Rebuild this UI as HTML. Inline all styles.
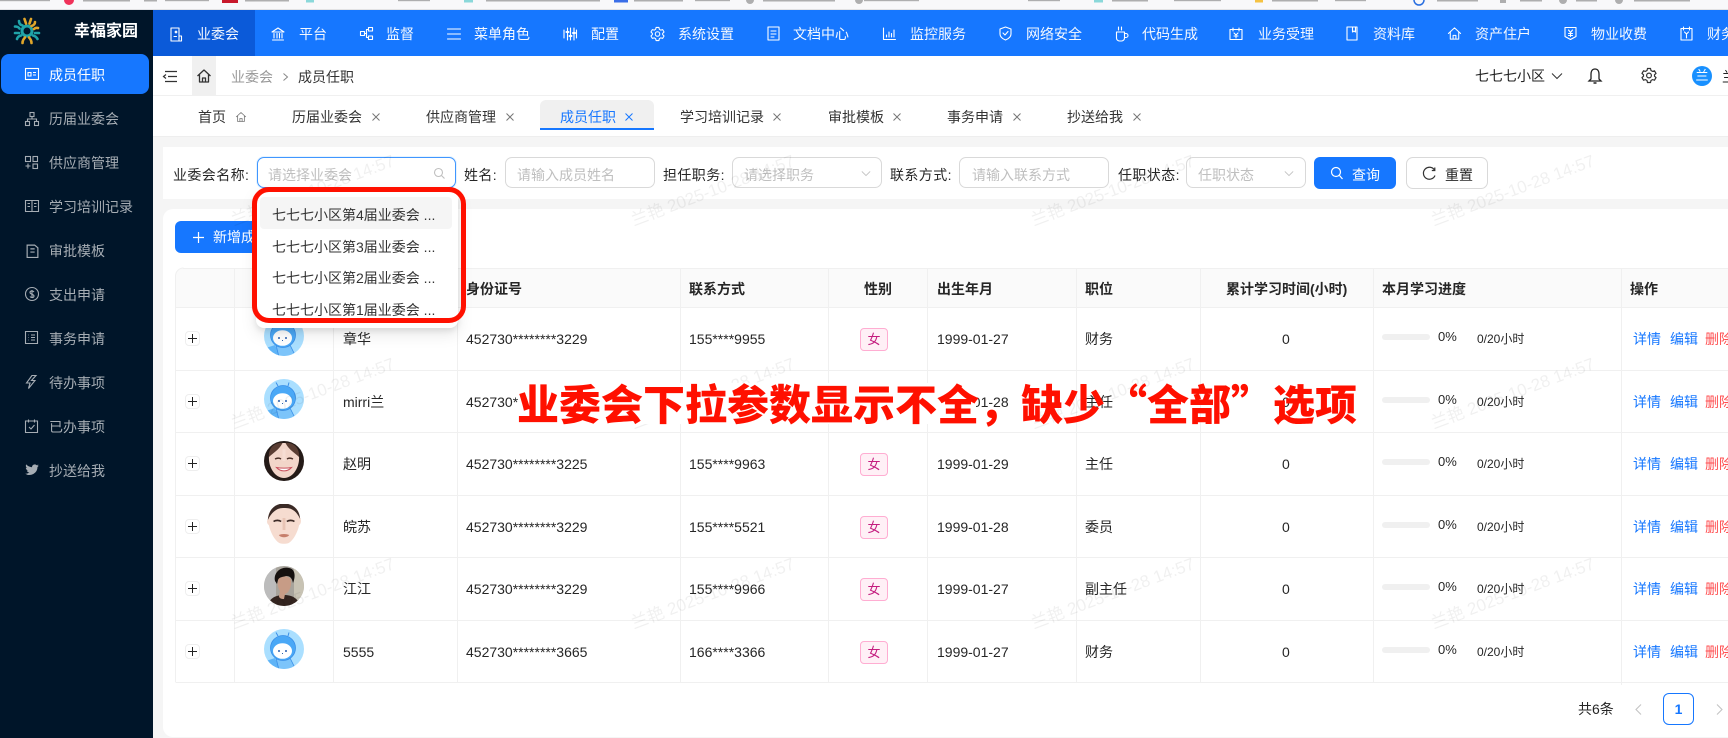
<!DOCTYPE html>
<html lang="zh-CN"><head><meta charset="utf-8"><title>成员任职</title>
<style>
*{box-sizing:border-box}
html,body{margin:0;padding:0;width:1728px;height:738px;overflow:hidden;background:#f5f5f5;font-family:"Liberation Sans","Noto Sans CJK SC",sans-serif;font-size:14px;color:#262626}
div,span,svg{position:absolute}
.t{white-space:nowrap;line-height:20px}
svg{overflow:visible;fill:none}
svg.i{stroke:#fff;stroke-width:1.1;stroke-linecap:round;stroke-linejoin:round}
.n{color:#f4f8ff;top:24px}
.m{color:#a6adb4;left:49px}
svg.s{stroke:#a6adb4;left:25px;stroke-width:1.1}
.tb{top:107px;color:#333}
.x{top:112px;width:10px;height:10px;stroke:#777;stroke-width:1}
.l{top:165px;letter-spacing:.4px}
.b{top:157px;height:31px;background:#fff;border:1px solid #d9d9d9;border-radius:7px}
.p{top:165px;color:#bfbfbf}
.th{top:279px;font-weight:700;color:#262626}
.r{left:0;width:1728px;height:20px}
.pl{left:185px;top:2px;width:15px;height:15px;border:1px solid #eee;border-radius:4px;background:#fff}
.pl:before{content:"";position:absolute;left:2px;top:6px;width:9px;height:1px;background:#222}
.pl:after{content:"";position:absolute;left:6px;top:2px;width:1px;height:9px;background:#222}
.tag{left:860px;top:-1px;width:28px;height:23px;background:#fff0f6;border:1px solid #ffadd2;border-radius:4px;color:#c41d7f;text-align:center;line-height:21px;font-size:13px}
.bar{left:1382px;top:5px;width:48px;height:6px;border-radius:3px;background:#f0f0f0}
.wm{white-space:nowrap;font-size:17px;line-height:20px;color:rgba(0,0,0,.06);width:200px;text-align:center;transform:rotate(-20.5deg)}
.o{left:16px;color:#333;white-space:nowrap;line-height:20px}
</style></head><body>

<svg width="0" height="0" style="left:0;top:0">
<defs>
<symbol id="gear" viewBox="0 0 16 17"><path d="M6.5 1.5h3l.5 2 1.5.9 2-.6 1.5 2.6-1.5 1.4v1.4l1.5 1.4-1.5 2.6-2-.6-1.5.9-.5 2h-3l-.5-2-1.5-.9-2 .6-1.5-2.6 1.5-1.4V7.8L1 6.4l1.5-2.6 2 .6 1.5-.9z"/><circle cx="8" cy="8.5" r="2.4"/></symbol>
<symbol id="home" viewBox="0 0 16 16"><path d="M1.5 8 8 2l6.500 6M3.500 6.500V14h9V6.500M6.500 14v-4h3v4"/></symbol>
<symbol id="x" viewBox="0 0 10 10"><path d="M1.500 1.500l7 7M8.500 1.500l-7 7"/></symbol>
<symbol id="cv" viewBox="0 0 12 8"><path d="M1 1.500 6 6.500 11 1.500"/></symbol>
<symbol id="cart" viewBox="0 0 40 40">
<clipPath id="c1"><ellipse cx="20" cy="20" rx="20" ry="20"/></clipPath>
<g clip-path="url(#c1)"><rect width="40" height="40" fill="#aadfff"/>
<path d="M-1 33l12-4 6 13H-1z" fill="#5fb4f7"/>
<path d="M12 29l13-2 7 14H15z" fill="#7cc4fa" stroke="#3a8fe8" stroke-width=".8"/>
<path d="M14 7l-2-3.500M24 7l1-3.500" stroke="#3a8fe8" stroke-width="1"/>
<circle cx="19" cy="19" r="12.500" fill="#4aa8f6" stroke="#3a8fe8" stroke-width=".8"/>
<ellipse cx="18.500" cy="22" rx="9.500" ry="7.800" fill="#fff"/>
<circle cx="15" cy="22" r="1" fill="#2a5fb0"/><circle cx="22" cy="22" r="1" fill="#2a5fb0"/><path d="M18 24.500h1" stroke="#2a5fb0" stroke-width="1"/>
</g></symbol>
<symbol id="girl" viewBox="0 0 40 40">
<clipPath id="c2"><circle cx="20" cy="20" r="20"/></clipPath>
<g clip-path="url(#c2)"><rect width="40" height="40" fill="#241a17"/>
<path d="M5 15C6 6 13 2 20 2s14 4 15 13c1 11-6 22-15 22S4 26 5 15z" fill="#f2d5c9"/>
<path d="M5 16C9 12 15 9 18.500 2 11 1 4 7 5 16zM35 16C31 12 25 9 21.500 2 29 1 36 7 35 16z" fill="#5a3d33"/>
<path d="M11 18c2-1 4.500-1 6 0M23 18c1.500-1 4-1 6 0" stroke="#4a3028" stroke-width="1.400"/>
<path d="M12.500 26.500c4 4.500 11 4.500 15 0-4 .8-11 .8-15 0z" fill="#fff" stroke="#c9505c" stroke-width="1"/>
<path d="M20 8v12" stroke="#f8e3da" stroke-width="3" opacity=".6"/></g></symbol>
<symbol id="face" viewBox="0 0 40 40">
<path d="M3 15C4 5 11 0 20 0s16 4 17 14c1.500 2 1 6-1 7-2 8-6 15-11 18-3 1-7 1-10 0C10 36 6 29 4 21c-2-1-2.500-4-1-6z" fill="#f6dcd0"/>
<path d="M3 16C4 4 12-.5 20-.5S36 4 37 15C33 7 28 3.500 20 4 13 3.500 7 8 3 16z" fill="#3a2a26"/>
<path d="M9 17.500c2-1.500 6-1.500 8 0M23 17.500c2-1.500 6-1.500 8 0" stroke="#3c2a26" stroke-width="1.700"/>
<path d="M14.500 31c3-1.400 8-1.400 11 0-2 3-9 3-11 0z" fill="#c67f6c"/>
<path d="M20 14v12" stroke="#e8c4b5" stroke-width="3"/></symbol>
<symbol id="man" viewBox="0 0 40 40">
<clipPath id="c3"><circle cx="20" cy="20" r="20"/></clipPath>
<g clip-path="url(#c3)"><rect width="40" height="40" fill="#a8a49c"/><rect x="0" width="12" height="40" fill="#bcbcbc"/><rect x="30" width="10" height="40" fill="#c8c3b4"/>
<path d="M4 40c1-8 8-11 16-11s14 3 16 11z" fill="#33241f"/>
<path d="M14 14c0-5 12-5 13 0 1 6-2 13-6 14l-1 5c-3 0-5-1-5-3l1-5c-2-3-3-7-2-11z" fill="#c79c86"/>
<path d="M11 15C9 6 18 0 25 2c6 1 7 8 4 15-1-5-3-7-7-7-3 1-7 1-8 4l-1 4z" fill="#16110f"/></g></symbol>
<symbol id="cs" viewBox="0 0 14 14"><path d="M2 1.500h7l3 2.500v9H2zM5 5h4M5 8h4"/></symbol>
</defs></svg>

<!-- browser strip -->
<div style="left:0;top:0;width:1728px;height:10px;background:#f8f8fa;border-bottom:1px solid #e2e2e4"></div>
<svg style="left:0;top:0" width="1728" height="4">
<g fill="#666" opacity=".5">
<rect x="0" y="0" width="50" height="1.200"/><rect x="83" y="0" width="47" height="1.500"/><rect x="165" y="0" width="44" height="1.200"/><rect x="245" y="0" width="44" height="1.500"/><rect x="398" y="0" width="32" height="1.200"/><rect x="486" y="0" width="114" height="1.500"/><rect x="634" y="0" width="49" height="1.500"/><rect x="695" y="0" width="35" height="1.200"/><rect x="763" y="0" width="72" height="1.500"/><rect x="864" y="0" width="55" height="1.200"/><rect x="1028" y="0" width="32" height="1.200"/><rect x="1112" y="0" width="36" height="1.500"/><rect x="1174" y="0" width="47" height="1.200"/><rect x="1272" y="0" width="46" height="1.500"/><rect x="1335" y="0" width="31" height="1.200"/><rect x="1437" y="0" width="41" height="1.500"/><rect x="1500" y="0" width="6" height="3"/><rect x="1520" y="0" width="22" height="1.500"/><rect x="1576" y="0" width="21" height="1.500"/><rect x="1634" y="0" width="56" height="1.500"/><rect x="144" y="0" width="13" height="1.500"/>
<circle cx="750" cy="0" r="4"/><circle cx="859" cy="0" r="4"/><circle cx="1563" cy="0" r="4"/><circle cx="1619" cy="0" r="4"/></g>
<circle cx="69" cy="0" r="5" fill="#f0325a"/><rect x="222" y="0" width="16" height="3" fill="#c8182c"/>
<rect x="306" y="0" width="8" height="2.500" fill="#8ad8da"/><rect x="464" y="0" width="9" height="2.500" fill="#8ad8da"/><rect x="1094" y="0" width="9" height="2.500" fill="#8ad8da"/>
<rect x="614" y="0" width="14" height="2.500" fill="#3a6ee8"/><rect x="1255" y="0" width="8" height="2.500" fill="#f5c242"/><circle cx="1419" cy="0" r="5" stroke="#2a6fe0" stroke-width="1.500"/>
</svg>

<!-- header -->
<div style="left:153px;top:10px;width:1575px;height:46px;background:#1677ff"></div>
<div style="left:153px;top:10px;width:102px;height:46px;background:#0b5ad9"></div>
<svg class="i" style="left:169px;top:27px" width="14" height="15" viewBox="0 0 14 15"><path d="M2 1h8v13H2zM10 9h2.500v5H10M5 9.500h2.500"/><circle cx="7" cy="5" r=".8"/></svg>
<span class="t n" style="left:197px">业委会</span>
<svg class="i" style="left:271px;top:27px" width="14" height="14" viewBox="0 0 14 14"><path d="M1 5l6-4 6 4zM1.500 13h11M3 6.500v4.500M6 6.500v4.500M8.500 6.500v4.500M11 6.500v4.500"/></svg>
<span class="t n" style="left:299px">平台</span>
<svg class="i" style="left:360px;top:27px" width="13" height="13" viewBox="0 0 13 13"><rect x=".5" y="4.500" width="4" height="4"/><rect x="8.500" y=".5" width="4" height="3.500"/><rect x="8.500" y="9" width="4" height="3.500"/><path d="M4.500 6.500h2M6.500 2.500v8M6.500 2.500h2M6.500 10.500h2"/></svg>
<span class="t n" style="left:386px">监督</span>
<svg class="i" style="left:447px;top:28px" width="14" height="12" viewBox="0 0 14 12"><path d="M.5 1h13M.5 6h13M.5 11h13"/></svg>
<span class="t n" style="left:474px">菜单角色</span>
<svg class="i" style="left:563px;top:27px" width="14" height="14" viewBox="0 0 14 14"><path d="M1 3v8M4.500 1v12M7.500 1v12M11 1v12M13.500 3v8"/><path d="M3.500 5h2M6.500 9h2M10 6h2" stroke-width="2"/></svg>
<span class="t n" style="left:591px">配置</span>
<svg class="i" style="left:650px;top:26px" width="15" height="16"><use href="#gear"/></svg>
<span class="t n" style="left:678px">系统设置</span>
<svg class="i" style="left:767px;top:26px" width="13" height="15" viewBox="0 0 13 15"><path d="M1 1h11v13H1zM4 5h5M4 8h5M4 11h3"/></svg>
<span class="t n" style="left:793px">文档中心</span>
<svg class="i" style="left:883px;top:28px" width="13" height="12" viewBox="0 0 13 12"><path d="M.5 0v11.500h12M3.500 9V7M6 9V4M8.500 9V5.500M11 9V2"/></svg>
<span class="t n" style="left:910px">监控服务</span>
<svg class="i" style="left:999px;top:26px" width="13" height="15" viewBox="0 0 13 15"><path d="M6.500 1 12 3v5c0 3-3 5-5.500 6C4 13 1 11 1 8V3zM4 7l2 2 3-3.500"/></svg>
<span class="t n" style="left:1026px">网络安全</span>
<svg class="i" style="left:1115px;top:26px" width="13" height="16" viewBox="0 0 13 16"><path d="M1.500 6h8v6a3 3 0 0 1-3 3h-2a3 3 0 0 1-3-3zM9.500 7.500h1.500a1.500 1.500 0 0 1 0 4H9.500M3.500 1v3M6.500 1v3"/></svg>
<span class="t n" style="left:1142px">代码生成</span>
<svg class="i" style="left:1229px;top:27px" width="14" height="14" viewBox="0 0 14 14"><path d="M1 2.500h12v10H1zM4 1v3M10 1v3M5 6l2 2 2-2M7 8v3M5 9h4"/></svg>
<span class="t n" style="left:1258px">业务受理</span>
<svg class="i" style="left:1346px;top:26px" width="12" height="15" viewBox="0 0 12 15"><path d="M1 1h10v13H1zM6.500 1v5l1.500-1 1.500 1V1"/></svg>
<span class="t n" style="left:1373px">资料库</span>
<svg class="i" style="left:1447px;top:26px" width="15" height="15"><use href="#home"/></svg>
<span class="t n" style="left:1475px">资产住户</span>
<svg class="i" style="left:1564px;top:26px" width="13" height="15" viewBox="0 0 13 15"><path d="M1 1.500h11v9l-5.500 3-5.500-3zM4.500 4l2 2.500 2-2.500M6.500 6.500v4M4.500 7.500h4M4.500 9.500h4"/></svg>
<span class="t n" style="left:1591px">物业收费</span>
<svg class="i" style="left:1680px;top:26px" width="13" height="15" viewBox="0 0 13 15"><path d="M1 2.500h11V14H1zM3.500 1v3M9.500 1v3M4.500 6l2 2 2-2M6.500 8v4"/></svg>
<span class="t n" style="left:1707px">财务</span>

<!-- sidebar -->
<div style="left:0;top:10px;width:153px;height:728px;background:#001529"></div>
<svg style="left:13px;top:17px" width="28" height="28" viewBox="0 0 28 28" stroke-linecap="round">
<circle cx="14" cy="14" r="5" stroke="#1fa3a8" stroke-width="3"/>
<path d="M11.500 2l1.500 4.500M18 2l-1.500 4.500M22 5c0 2-1.500 3.500-3.500 4M25 11c-1.500-.5-3 0-4 1" stroke="#e0a62a" stroke-width="2.600"/>
<path d="M6 4c0 2.500 1.500 4 3.500 4.500M2 9.500c2 0 3.500.5 4.500 2M2 16h4M4 22c.5-2 2-3 4-3.500M26 16h-4M24.500 22c-1-2-2.500-3-4.500-3.500" stroke="#1fa3a8" stroke-width="2.600"/>
<path d="M9.500 26c0-2.500 1-4 2.500-5.500M18.500 26c0-2.500-1-4-2.500-5.500" stroke="#e0a62a" stroke-width="2.600"/>
</svg>
<span class="t" style="left:74px;top:22px;color:#fff;font-size:16px;font-weight:700">幸福家园</span>
<div style="left:1px;top:54px;width:148px;height:40px;background:#1677ff;border-radius:8px"></div>
<svg class="s" style="top:68px;stroke:#fff" width="14" height="12" viewBox="0 0 14 12"><rect x=".5" y=".5" width="13" height="11"/><path d="M3 4.500h3v3.500H3zM8 4.500h3M8 7h3"/></svg>
<span class="t m" style="top:65px;color:#fff">成员任职</span>
<svg class="s" style="top:112px" width="14" height="14" viewBox="0 0 14 14"><rect x="5" y=".5" width="4" height="4"/><rect x=".5" y="9.500" width="4" height="4"/><rect x="9.500" y="9.500" width="4" height="4"/><path d="M7 4.500V7M2.500 9.500V7h9v2.500"/></svg>
<span class="t m" style="top:109px">历届业委会</span>
<svg class="s" style="top:156px" width="13" height="13" viewBox="0 0 13 13"><rect x=".5" y=".5" width="5" height="5"/><rect x="8" y=".5" width="4.500" height="5"/><rect x="8" y="8" width="4.500" height="4.500"/><path d="M3 7.500v5M.5 10h5"/></svg>
<span class="t m" style="top:153px">供应商管理</span>
<svg class="s" style="top:200px" width="14" height="12" viewBox="0 0 14 12"><path d="M.5 .5h13v11H.5zM7 .5v11M2.500 3.500h2.500M2.500 6.500h2.500M9 3.500h2.500M9 6.500h2.500"/></svg>
<span class="t m" style="top:197px">学习培训记录</span>
<svg class="s" style="top:243px" width="15" height="16"><use href="#cs"/></svg>
<span class="t m" style="top:241px">审批模板</span>
<svg class="s" style="top:287px" width="14" height="14" viewBox="0 0 14 14"><circle cx="7" cy="7" r="6.500"/><path d="M9 5c-1-1.500-4-1.500-4 .5S9 7 9 9s-3 2-4 .5M7 3v8"/></svg>
<span class="t m" style="top:285px">支出申请</span>
<svg class="s" style="top:331px" width="13" height="13" viewBox="0 0 13 13"><path d="M.5 .5h12v12H.5zM3.500 4h.5M3.500 6.500h.5M3.500 9h.5M6 4h4M6 6.500h4M6 9h4"/></svg>
<span class="t m" style="top:329px">事务申请</span>
<svg class="s" style="top:375px" width="12" height="14" viewBox="0 0 12 14"><path d="M7 .5 1.500 8H5l-1.500 5.500L10 5.500H6.500L11 .5z"/></svg>
<span class="t m" style="top:373px">待办事项</span>
<svg class="s" style="top:419px" width="13" height="14" viewBox="0 0 13 14"><path d="M.5 2h12v11.500H.5zM3.500 .5v3M9.500 .5v3M4 8l2 2 3.500-4"/></svg>
<span class="t m" style="top:417px">已办事项</span>
<svg style="left:25px;top:464px" width="14" height="12" viewBox="0 0 14 12"><path d="M13.800 1.500c-.5.300-1 .4-1.600.5.600-.4 1-.9 1.200-1.500-.5.300-1.100.5-1.700.7A2.800 2.800 0 0 0 7 3.200C4.700 3.100 2.600 2 1.200.4c-.7 1.300-.4 2.900.9 3.700-.5 0-.9-.1-1.300-.3 0 1.300 1 2.500 2.300 2.800-.4.100-.9.100-1.300 0 .4 1.100 1.400 1.900 2.600 1.900A5.700 5.700 0 0 1 .2 9.700 8 8 0 0 0 12.500 3c.5-.4 1-.9 1.300-1.500z" fill="#a6adb4"/></svg>
<span class="t m" style="top:461px">抄送给我</span>

<!-- breadcrumb bar -->
<div style="left:153px;top:56px;width:1575px;height:40px;background:#fff;border-bottom:1px solid #f0f0f0"></div>
<svg style="left:163px;top:71px;stroke:#333;stroke-width:1.200" width="14" height="11" viewBox="0 0 14 11"><path d="M2 .5h12M5 5.500h9M2 10.500h12M3 3.500 .5 5.500 3 7.500"/></svg>
<div style="left:192px;top:56px;width:24px;height:39px;background:#f0f0f0"></div>
<svg style="left:196px;top:68px;stroke:#333;stroke-width:1.300;stroke-linejoin:round" width="16" height="16"><use href="#home"/></svg>
<span class="t" style="left:231px;top:67px;color:#999">业委会</span>
<svg style="left:283px;top:73px;stroke:#888;stroke-width:1" width="5" height="8" viewBox="0 0 5 8"><path d="M.5 .5 4.500 4 .5 7.500"/></svg>
<span class="t" style="left:298px;top:67px;color:#333">成员任职</span>
<span class="t" style="left:1475px;top:66px;color:#222">七七七小区</span>
<svg style="left:1551px;top:72px;stroke:#333;stroke-width:1" width="12" height="8"><use href="#cv"/></svg>
<svg style="left:1588px;top:68px;stroke:#222;stroke-width:1.300" width="14" height="16" viewBox="0 0 14 16"><path d="M7 1C4 1 3 3.500 3 6v5l-2 2h12l-2-2V6c0-2.500-1-5-4-5z"/><path d="M5.500 15h3" stroke-width="1.500"/></svg>
<svg style="left:1641px;top:67px;stroke:#333;stroke-width:1.200" width="16" height="17"><use href="#gear"/></svg>
<div style="left:1692px;top:66px;width:20px;height:20px;border-radius:50%;background:#1890ff;color:#fff;font-size:13px;line-height:20px;text-align:center">兰</div>
<span class="t" style="left:1722px;top:67px;color:#222">兰</span>

<!-- tabs -->
<div style="left:153px;top:96px;width:1575px;height:41px;background:#fff;border-bottom:1px solid #eee"></div>
<span class="t tb" style="left:198px">首页</span>
<svg style="left:235px;top:111px;stroke:#777;stroke-width:1.100;stroke-linejoin:round" width="12" height="12"><use href="#home"/></svg>
<span class="t tb" style="left:292px">历届业委会</span><svg class="x" style="left:371px"><use href="#x"/></svg>
<span class="t tb" style="left:426px">供应商管理</span><svg class="x" style="left:505px"><use href="#x"/></svg>
<div style="left:540px;top:100px;width:114px;height:30px;background:#f0f0f0;border-radius:6px 6px 0 0;border-bottom:2px solid #1677ff"></div>
<span class="t tb" style="left:560px;color:#1677ff">成员任职</span><svg class="x" style="left:624px;stroke:#1677ff"><use href="#x"/></svg>
<span class="t tb" style="left:680px">学习培训记录</span><svg class="x" style="left:772px"><use href="#x"/></svg>
<span class="t tb" style="left:828px">审批模板</span><svg class="x" style="left:892px"><use href="#x"/></svg>
<span class="t tb" style="left:947px">事务申请</span><svg class="x" style="left:1012px"><use href="#x"/></svg>
<span class="t tb" style="left:1067px">抄送给我</span><svg class="x" style="left:1132px"><use href="#x"/></svg>

<!-- search card -->
<div style="left:163px;top:147px;width:1565px;height:52px;background:#fff"></div>
<span class="t l" style="left:173px">业委会名称:</span>
<div class="b" style="left:257px;width:199px;border-color:#4096ff;box-shadow:0 0 0 1px rgba(5,145,255,.1)"></div>
<span class="t p" style="left:268px">请选择业委会</span>
<svg style="left:434px;top:168px;stroke:#bfbfbf;stroke-width:1.100" width="11" height="11" viewBox="0 0 11 11"><circle cx="4.500" cy="4.500" r="4"/><path d="M7.500 7.500l3 3"/></svg>
<span class="t l" style="left:464px">姓名:</span>
<div class="b" style="left:505px;width:150px"></div>
<span class="t p" style="left:517px">请输入成员姓名</span>
<span class="t l" style="left:663px">担任职务:</span>
<div class="b" style="left:732px;width:150px"></div>
<span class="t p" style="left:744px">请选择职务</span>
<svg style="left:861px;top:170px;stroke:#bfbfbf;stroke-width:1" width="10" height="7"><use href="#cv"/></svg>
<span class="t l" style="left:890px">联系方式:</span>
<div class="b" style="left:959px;width:150px"></div>
<span class="t p" style="left:972px">请输入联系方式</span>
<span class="t l" style="left:1118px">任职状态:</span>
<div class="b" style="left:1186px;width:120px"></div>
<span class="t p" style="left:1198px">任职状态</span>
<svg style="left:1284px;top:170px;stroke:#bfbfbf;stroke-width:1" width="10" height="7"><use href="#cv"/></svg>
<div style="left:1314px;top:157px;width:82px;height:32px;background:#1677ff;border-radius:6px"></div>
<svg style="left:1331px;top:167px;stroke:#fff;stroke-width:1.200" width="12" height="13" viewBox="0 0 12 13"><circle cx="5" cy="5" r="4.500"/><path d="M8.500 8.500l3 3.500"/></svg>
<span class="t" style="left:1352px;top:165px;color:#fff">查询</span>
<div class="b" style="left:1406px;width:82px;height:32px"></div>
<svg style="left:1423px;top:167px;stroke:#333;stroke-width:1.200" width="13" height="13" viewBox="0 0 13 13"><path d="M11.500 3A6 6 0 1 0 12 8.500M11.800 .5v3h-3"/></svg>
<span class="t" style="left:1445px;top:165px;color:#262626">重置</span>

<!-- table card -->
<div style="left:163px;top:209px;width:1565px;height:528px;background:#fff;border-radius:10px 0 0 10px"></div>
<div style="left:175px;top:221px;width:90px;height:32px;background:#1677ff;border-radius:6px"></div>
<svg style="left:193px;top:232px;stroke:#fff;stroke-width:1.200" width="11" height="11" viewBox="0 0 11 11"><path d="M5.500 0v11M0 5.500h11"/></svg>
<span class="t" style="left:213px;top:227px;color:#fff">新增成员</span>

<div style="left:175px;top:268px;width:1553px;height:39px;background:#fafafa;border-radius:8px 0 0 0"></div>
<svg style="left:0;top:0" width="1728" height="738">
<g stroke="#f0f0f0" stroke-width="1">
<path d="M183 268.500H1728M175.500 307.500H1728M175.500 370.500H1728M175.500 432.500H1728M175.500 495.500H1728M175.500 557.500H1728M175.500 620.500H1728M175.500 682.500H1728"/>
<path d="M175.500 276V682M234.500 268V682M333.500 268V682M457.500 268V682M680.500 268V682M828.500 268V682M927.500 268V682M1076.500 268V682M1200.500 268V682M1373.500 268V682M1621.500 268V685"/>
<path d="M175.500 276a8 8 0 0 1 8-8" fill="none"/>
</g></svg>

<span class="t th" style="left:466px">身份证号</span>
<span class="t th" style="left:689px">联系方式</span>
<span class="t th" style="left:864px">性别</span>
<span class="t th" style="left:937px">出生年月</span>
<span class="t th" style="left:1085px">职位</span>
<span class="t th" style="left:1226px">累计学习时间(小时)</span>
<span class="t th" style="left:1382px">本月学习进度</span>
<span class="t th" style="left:1630px">操作</span>

<!-- rows -->
<div class="r" style="top:329px"><div class="pl"></div><svg style="left:264px;top:-13px" width="40" height="40"><use href="#cart"/></svg>
<span class="t" style="left:343px">章华</span><span class="t" style="left:466px">452730********3229</span><span class="t" style="left:689px">155****9955</span><div class="tag">女</div><span class="t" style="left:937px">1999-01-27</span><span class="t" style="left:1085px">财务</span><span class="t" style="left:1282px">0</span><div class="bar"></div><span class="t" style="left:1438px;top:-2px;font-size:13px">0%</span><span class="t" style="left:1477px;font-size:12px">0/20小时</span><span class="t" style="left:1633px;color:#1677ff">详情</span><span class="t" style="left:1670px;color:#1677ff">编辑</span><span class="t" style="left:1705px;color:#ff4d4f">删除</span></div>

<div class="r" style="top:392px"><div class="pl"></div><svg style="left:264px;top:-13px" width="40" height="40"><use href="#cart"/></svg>
<span class="t" style="left:343px">mirri兰</span><span class="t" style="left:466px">452730********3229</span><span class="t" style="left:689px">155****9955</span><div class="tag">女</div><span class="t" style="left:937px">1999-01-28</span><span class="t" style="left:1085px">主任</span><span class="t" style="left:1282px">0</span><div class="bar"></div><span class="t" style="left:1438px;top:-2px;font-size:13px">0%</span><span class="t" style="left:1477px;font-size:12px">0/20小时</span><span class="t" style="left:1633px;color:#1677ff">详情</span><span class="t" style="left:1670px;color:#1677ff">编辑</span><span class="t" style="left:1705px;color:#ff4d4f">删除</span></div>

<div class="r" style="top:454px"><div class="pl"></div><svg style="left:264px;top:-13px" width="40" height="40"><use href="#girl"/></svg>
<span class="t" style="left:343px">赵明</span><span class="t" style="left:466px">452730********3225</span><span class="t" style="left:689px">155****9963</span><div class="tag">女</div><span class="t" style="left:937px">1999-01-29</span><span class="t" style="left:1085px">主任</span><span class="t" style="left:1282px">0</span><div class="bar"></div><span class="t" style="left:1438px;top:-2px;font-size:13px">0%</span><span class="t" style="left:1477px;font-size:12px">0/20小时</span><span class="t" style="left:1633px;color:#1677ff">详情</span><span class="t" style="left:1670px;color:#1677ff">编辑</span><span class="t" style="left:1705px;color:#ff4d4f">删除</span></div>

<div class="r" style="top:517px"><div class="pl"></div><svg style="left:265px;top:-13px" width="38" height="40" viewBox="0 0 40 40" preserveAspectRatio="none"><use href="#face"/></svg>
<span class="t" style="left:343px">皖苏</span><span class="t" style="left:466px">452730********3229</span><span class="t" style="left:689px">155****5521</span><div class="tag">女</div><span class="t" style="left:937px">1999-01-28</span><span class="t" style="left:1085px">委员</span><span class="t" style="left:1282px">0</span><div class="bar"></div><span class="t" style="left:1438px;top:-2px;font-size:13px">0%</span><span class="t" style="left:1477px;font-size:12px">0/20小时</span><span class="t" style="left:1633px;color:#1677ff">详情</span><span class="t" style="left:1670px;color:#1677ff">编辑</span><span class="t" style="left:1705px;color:#ff4d4f">删除</span></div>

<div class="r" style="top:579px"><div class="pl"></div><svg style="left:264px;top:-13px" width="40" height="40"><use href="#man"/></svg>
<span class="t" style="left:343px">江江</span><span class="t" style="left:466px">452730********3229</span><span class="t" style="left:689px">155****9966</span><div class="tag">女</div><span class="t" style="left:937px">1999-01-27</span><span class="t" style="left:1085px">副主任</span><span class="t" style="left:1282px">0</span><div class="bar"></div><span class="t" style="left:1438px;top:-2px;font-size:13px">0%</span><span class="t" style="left:1477px;font-size:12px">0/20小时</span><span class="t" style="left:1633px;color:#1677ff">详情</span><span class="t" style="left:1670px;color:#1677ff">编辑</span><span class="t" style="left:1705px;color:#ff4d4f">删除</span></div>

<div class="r" style="top:642px"><div class="pl"></div><svg style="left:264px;top:-13px" width="40" height="40"><use href="#cart"/></svg>
<span class="t" style="left:343px">5555</span><span class="t" style="left:466px">452730********3665</span><span class="t" style="left:689px">166****3366</span><div class="tag">女</div><span class="t" style="left:937px">1999-01-27</span><span class="t" style="left:1085px">财务</span><span class="t" style="left:1282px">0</span><div class="bar"></div><span class="t" style="left:1438px;top:-2px;font-size:13px">0%</span><span class="t" style="left:1477px;font-size:12px">0/20小时</span><span class="t" style="left:1633px;color:#1677ff">详情</span><span class="t" style="left:1670px;color:#1677ff">编辑</span><span class="t" style="left:1705px;color:#ff4d4f">删除</span></div>

<!-- pagination -->
<span class="t" style="left:1578px;top:699px">共6条</span>
<svg style="left:1635px;top:704px;stroke:#c4c4c4;stroke-width:1.100" width="7" height="11" viewBox="0 0 7 11"><path d="M6 .5 1 5.500 6 10.500"/></svg>
<div style="left:1663px;top:693px;width:31px;height:32px;border:1px solid #1677ff;border-radius:6px;color:#1677ff;text-align:center;line-height:30px;font-weight:700">1</div>
<svg style="left:1716px;top:704px;stroke:#c4c4c4;stroke-width:1.100" width="7" height="11" viewBox="0 0 7 11"><path d="M1 .5 6 5.500 1 10.500"/></svg>

<!-- watermark -->
<div style="left:153px;top:136px;width:1575px;height:602px;overflow:hidden">
<span class="wm" style="left:60px;top:45px">兰艳 2025-10-28 14:57</span>
<span class="wm" style="left:460px;top:45px">兰艳 2025-10-28 14:57</span>
<span class="wm" style="left:860px;top:45px">兰艳 2025-10-28 14:57</span>
<span class="wm" style="left:1260px;top:45px">兰艳 2025-10-28 14:57</span>
<span class="wm" style="left:60px;top:248px">兰艳 2025-10-28 14:57</span>
<span class="wm" style="left:460px;top:248px">兰艳 2025-10-28 14:57</span>
<span class="wm" style="left:860px;top:248px">兰艳 2025-10-28 14:57</span>
<span class="wm" style="left:1260px;top:248px">兰艳 2025-10-28 14:57</span>
<span class="wm" style="left:60px;top:448px">兰艳 2025-10-28 14:57</span>
<span class="wm" style="left:460px;top:448px">兰艳 2025-10-28 14:57</span>
<span class="wm" style="left:860px;top:448px">兰艳 2025-10-28 14:57</span>
<span class="wm" style="left:1260px;top:448px">兰艳 2025-10-28 14:57</span>
</div>

<!-- dropdown -->
<div style="left:256px;top:190px;width:202px;height:138px;background:#fff;border-radius:8px;box-shadow:0 6px 16px rgba(0,0,0,.1),0 3px 6px rgba(0,0,0,.08)"></div>
<div style="left:256px;top:190px;width:202px;height:126px;overflow:hidden">
<div style="left:4px;top:7px;width:192px;height:32px;background:#f5f5f5;border-radius:4px"></div>
<span class="o" style="top:15px">七七七小区第4届业委会 ...</span>
<span class="o" style="top:47px">七七七小区第3届业委会 ...</span>
<span class="o" style="top:78px">七七七小区第2届业委会 ...</span>
<span class="o" style="top:110px">七七七小区第1届业委会 ...</span>
</div>
<div style="left:252px;top:187px;width:214px;height:136px;border:5px solid #ff1000;border-radius:17px"></div>

<!-- annotation -->
<div style="left:518px;top:383px;width:458px;height:41px;background:#fff"></div>
<span style="left:517px;top:376px;font-family:'Noto Sans CJK SC',sans-serif;font-size:42px;line-height:54px;font-weight:900;color:#ff1000;white-space:nowrap;text-spacing-trim:space-all;font-feature-settings:'palt' 0,'chws' 0,'halt' 0;font-kerning:none">业委会下拉参数显示不全，缺少“全部”选项</span>
</body></html>
